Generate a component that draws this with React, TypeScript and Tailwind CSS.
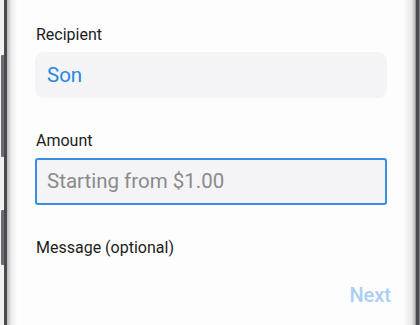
export default function App() {
  return (
    <div className="flex h-[325px] w-[420px] overflow-hidden bg-white font-['Roboto',sans-serif]">
      {/* left bezel */}
      <div className="flex w-[7px] shrink-0">
        <div className="flex w-[1px] flex-col bg-[#f2f2f2]" />
        <div className="flex w-[3px] flex-col">
          <div className="h-[55px] bg-[#f2f2f2]" />
          <div className="h-[102px] rounded-l-[1px] bg-[#6a6c72]" />
          <div className="h-[53px] bg-[#f2f2f2]" />
          <div className="h-[55px] rounded-l-[1px] bg-[#6a6c72]" />
          <div className="flex-1 bg-[#f2f2f2]" />
        </div>
        <div className="w-[3px] bg-[#4a4b51]" />
      </div>

      {/* screen */}
      <div className="flex flex-1 flex-col bg-[linear-gradient(to_right,#b9b9bb,#e9e9e9_4px,#fdfdfd_10px,#fdfdfd_calc(100%-12px),#e6e6e6_calc(100%-3px),#b5b5b7)] px-[28px] pt-[25px]">
        <div className="pl-[1px] text-[16px] leading-[20px] text-[#1c1c1c]">Recipient</div>
        <div className="mt-[7px] flex h-[46px] items-center rounded-[9px] bg-[#f4f4f6] px-[12px]">
          <span className="text-[20.5px] text-[#2b87da]">Son</span>
        </div>

        <div className="mt-[33px] pl-[1px] text-[16px] leading-[20px] text-[#1c1c1c]">Amount</div>
        <div className="mt-[7px] flex h-[47px] items-center rounded-[3px] border-2 border-[#3a8de0] bg-[#f4f4f6] px-[10px]">
          <span className="text-[20.5px] text-[#8a8a8c]">Starting from $1.00</span>
        </div>

        <div className="mt-[33px] pl-[1px] text-[16px] leading-[20px] text-[#1c1c1c]">Message (optional)</div>

        <div className="-mr-[4px] mt-[23px] flex justify-end">
          <span className="text-[20px] font-medium leading-[28px] text-[#a9cff2]">Next</span>
        </div>
      </div>

      {/* right bezel */}
      <div className="flex w-[5px] shrink-0">
        <div className="w-[1px] bg-[#9a9a9e]" />
        <div className="w-[3px] bg-[#4a4b51]" />
        <div className="w-[1px] bg-[#7c7d82]" />
      </div>
    </div>
  );
}
